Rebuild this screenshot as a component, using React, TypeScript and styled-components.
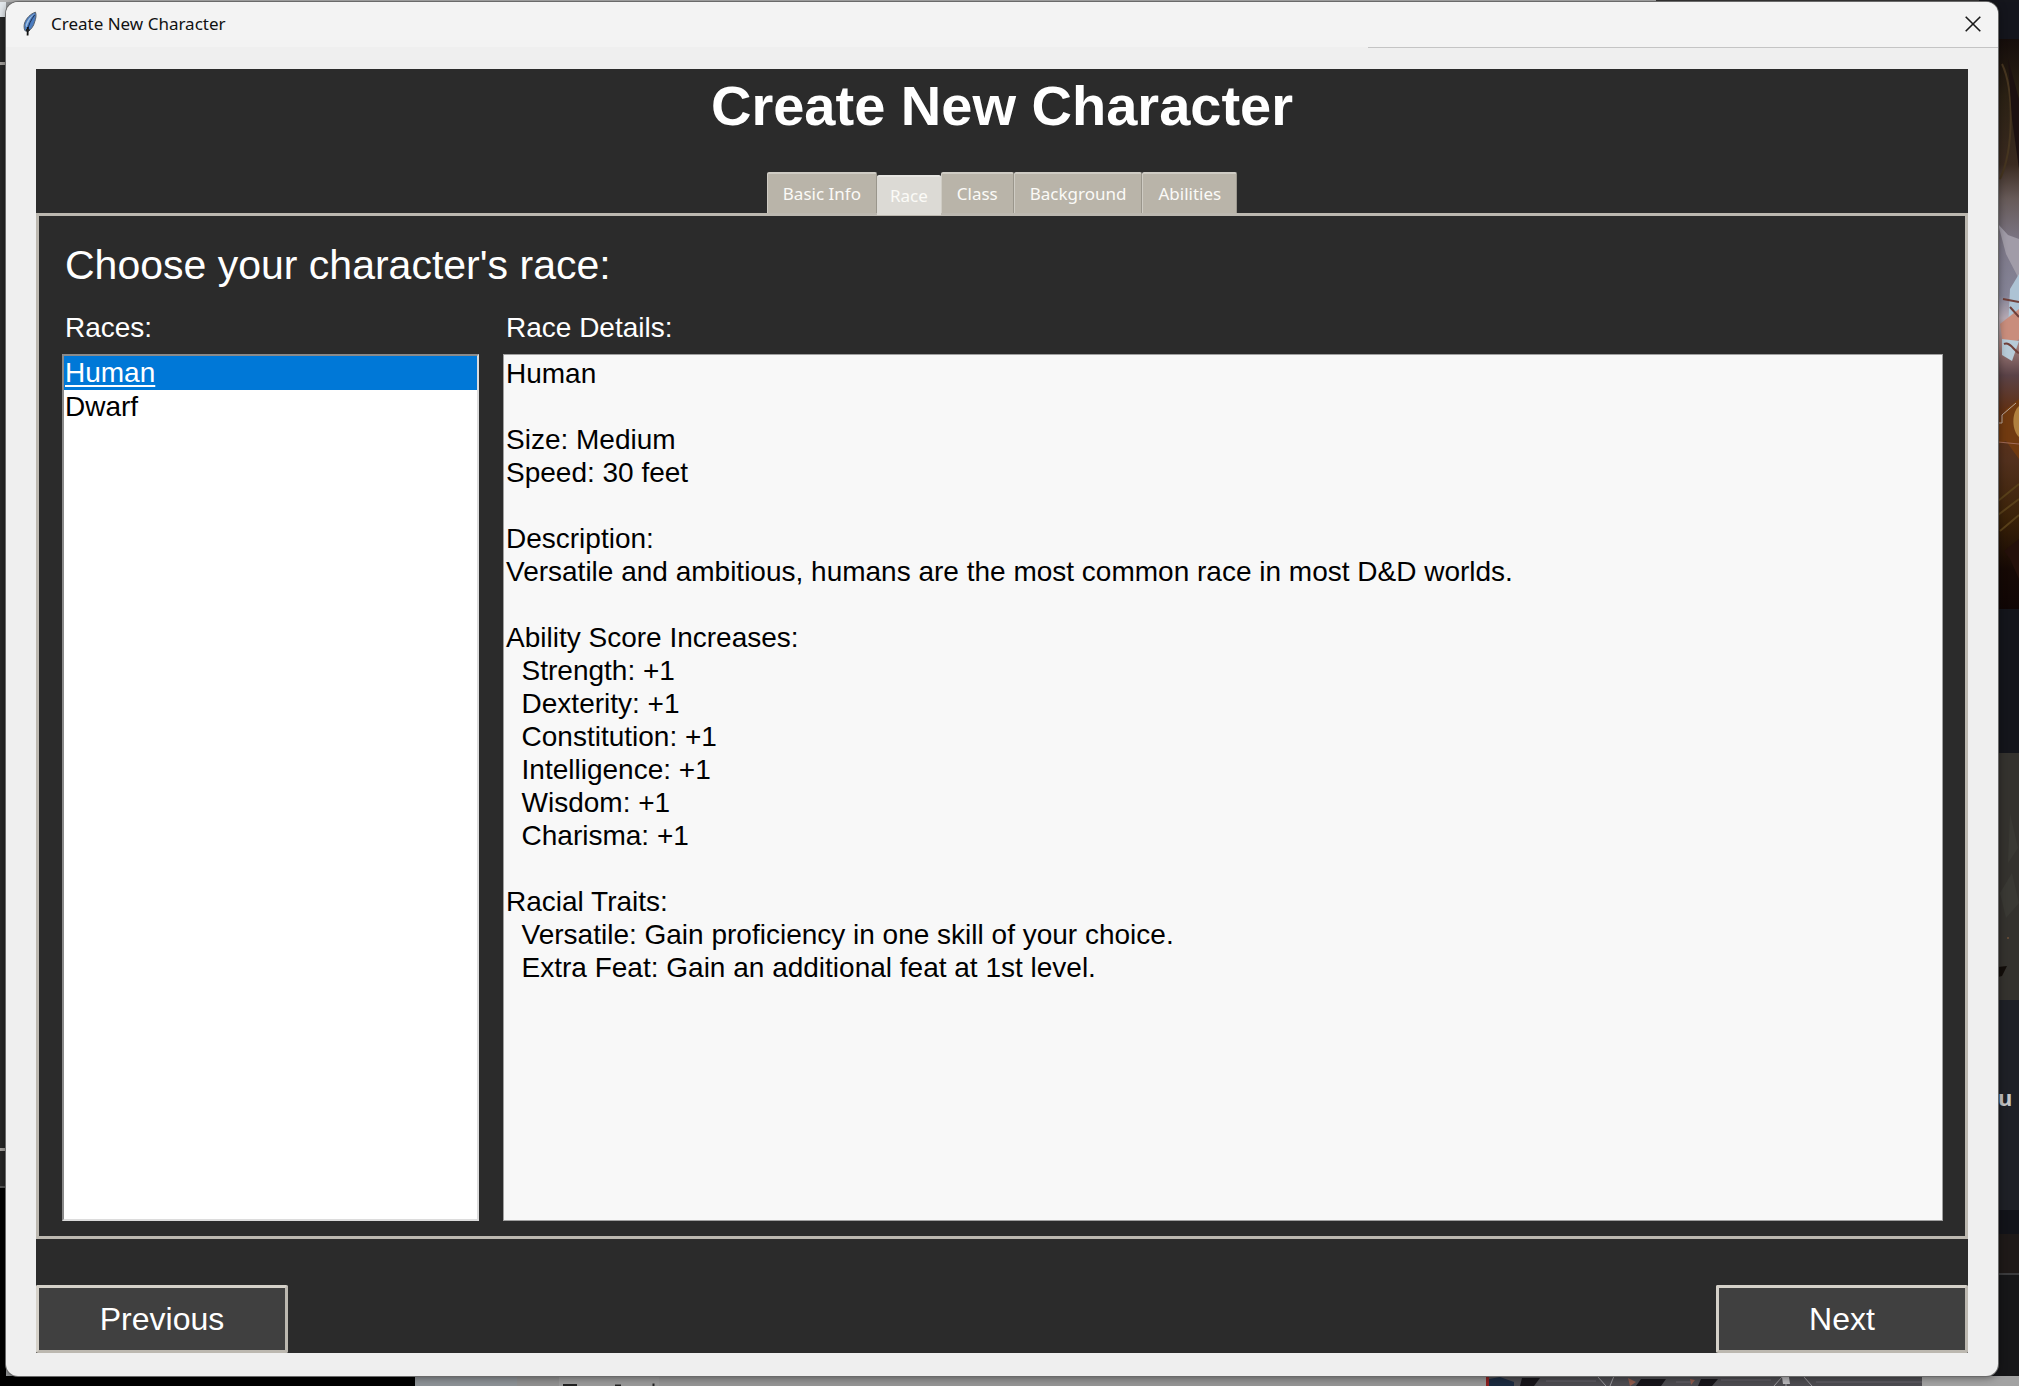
import React, { useState } from "react";
import styled, { createGlobalStyle } from "styled-components";

const SANS = `"Liberation Sans", Arial, sans-serif`;
const SYSTEM = `"Noto Sans", "Segoe UI", sans-serif`;

const GlobalStyle = createGlobalStyle`
  *, *::before, *::after { box-sizing: border-box; }
  body { margin: 0; background: #17181c; }
`;

const Desktop = styled.div`
  display: grid;
  grid-template: 2px 1fr 10px / 6px 1fr 21px;
  min-height: 100vh;
  overflow: hidden;
  background: linear-gradient(90deg, #9a9c9e 0 20px, #17181c 20px);
  font-family: ${SANS};
`;

const TopEdge = styled.div`
  grid-column: 1 / -1;
  background: linear-gradient(90deg, #b5b5b5 0 82%, #3a3838 82% 98%, #15161c 98%);
`;

const LeftEdge = styled.div`
  background: linear-gradient(
    #e3e8ec 0 15px, #272727 15px 60px, #a5a29e 60px 63px, #272727 63px 1146px,
    #a5a29e 1146px 1149px, #272727 1149px 1184px, #555555 1184px 1186px, #000000 1186px
  );
`;

const RightEdge = styled.div`
  display: flex;
  flex-direction: column;
  overflow: hidden;
  background: #15161c;
`;

const Strip = styled.div<{ $height: number; $color: string }>`
  flex: 0 0 ${(p) => p.$height}px;
  background: ${(p) => p.$color};
`;

const Rest = styled.div`
  flex: 1;
  background: #161618;
  border-top: 2px solid #3b3b3d;
`;

const PageText = styled.div`
  flex: 0 0 210px;
  padding-top: 81px;
  background: #1e2026;
  color: #c4c5c7;
  font: 700 22px/32px ${SYSTEM};
`;

const BottomEdge = styled.div`
  grid-column: 1 / -1;
  display: flex;
  overflow: hidden;
  background: #9a9a9a;
`;

const BottomPart = styled.div<{ $width: number; $color: string }>`
  flex: 0 0 ${(p) => p.$width}px;
  background: ${(p) => p.$color};
`;

const Spring = styled.div`
  flex: 1;
  background: #959595;
`;

const Window = styled.main`
  position: relative;
  display: flex;
  flex-direction: column;
  background: #efefef;
  border-radius: 12px;
  box-shadow: 0 0 0 1px #6a6a6a, 0 1px 8px rgba(0, 0, 0, 0.5);
`;

const TitleBar = styled.header`
  display: flex;
  align-items: center;
  height: 46px;
  padding: 0 17px 3px 16px;
  gap: 12px;
  border-radius: 12px 12px 0 0;
  background:
    linear-gradient(90deg, #efefef 0 1362px, #c4c4c4 1362px) left bottom / 100% 1px no-repeat,
    #f3f3f3;
`;

const WindowName = styled.span`
  flex: 1;
  color: #111111;
  font: 400 17px/24px ${SYSTEM};
`;

const CloseButton = styled.button`
  display: flex;
  padding: 0;
  border: 0;
  background: none;
`;

const Body = styled.div`
  flex: 1;
  display: flex;
  flex-direction: column;
  margin: 21px 30px 23px;
  background: #2b2b2b;
`;

const Title = styled.h1`
  margin: 5px 0 34px;
  color: #ffffff;
  text-align: center;
  font: 700 56px/64px ${SANS};
`;

const Tabs = styled.div`
  display: flex;
  justify-content: center;
  align-items: flex-end;
  height: 41px;
`;

const Tab = styled.button<{ $active: boolean }>`
  position: relative;
  height: ${(p) => (p.$active ? 40 : 41)}px;
  margin: 0 0 ${(p) => (p.$active ? -2 : 0)}px;
  padding: 0 ${(p) => (p.$active ? 13 : 15)}px;
  border: solid;
  border-width: ${(p) => (p.$active ? "2px 0 0" : "2px 1px 0")};
  border-color: ${(p) => (p.$active ? "#e6e5e1" : "#cfccc4 #9a968c #cfccc4 #cfccc4")};
  border-radius: 2px 2px 0 0;
  background: ${(p) => (p.$active ? "#dcdad5" : "#b9b4a9")};
  color: #fbfaf7;
  font: 400 17px/24px ${SYSTEM};
`;

const Page = styled.section`
  flex: 1;
  display: flex;
  flex-direction: column;
  padding: 25px 22px 15px 23px;
  border: 3px solid #bcb8b0;
`;

const Prompt = styled.h2`
  margin: 0 3px 22px;
  color: #ffffff;
  font: 400 41px/48px ${SANS};
`;

const Columns = styled.div`
  flex: 1;
  display: flex;
  gap: 24px;
`;

const Column = styled.div<{ $width?: number }>`
  flex: ${(p) => (p.$width ? `0 0 ${p.$width}px` : "1")};
  display: flex;
  flex-direction: column;
`;

const FieldName = styled.label`
  margin: 0 3px 10px;
  color: #ffffff;
  font: 400 28px/33px ${SANS};
`;

const RaceList = styled.select`
  flex: 1;
  width: 100%;
  padding: 0;
  overflow: hidden;
  border: 2px solid;
  border-color: #8a8a8a #dcdcdc #dcdcdc #8a8a8a;
  border-radius: 0;
  outline: 0;
  background: #ffffff;
  color: #000000;
  font: 400 28px/34px ${SANS};
`;

const RaceOption = styled.option`
  min-height: 34px;
  padding: 1px 1px 0;
  line-height: 33px;
  color: #000000;

  &:checked {
    background: #0078d7 linear-gradient(#0078d7, #0078d7);
    color: #ffffff;
    text-decoration: underline;
    text-decoration-thickness: 2px;
    text-underline-offset: 3px;
  }
`;

const Details = styled.textarea`
  flex: 1;
  display: block;
  width: 100%;
  padding: 2px;
  resize: none;
  overflow: hidden;
  border: 1px solid #a0a0a0;
  border-radius: 0;
  outline: 0;
  background: #f8f8f8;
  color: #000000;
  font: 400 28px/33px ${SANS};
`;

const Footer = styled.footer`
  display: flex;
  justify-content: space-between;
  margin-top: 46px;
`;

const NavButton = styled.button`
  width: 252px;
  height: 68px;
  padding: 0;
  border: 3px solid;
  border-color: #d5d1c9 #bcb8b0 #bcb8b0 #d5d1c9;
  border-radius: 2px;
  background: #404040;
  color: #ffffff;
  font: 400 32px/36px ${SANS};
`;

const RACES: Record<string, string> = {
  Human: `Human

Size: Medium
Speed: 30 feet

Description:
Versatile and ambitious, humans are the most common race in most D&D worlds.

Ability Score Increases:
  Strength: +1
  Dexterity: +1
  Constitution: +1
  Intelligence: +1
  Wisdom: +1
  Charisma: +1

Racial Traits:
  Versatile: Gain proficiency in one skill of your choice.
  Extra Feat: Gain an additional feat at 1st level.`,
  Dwarf: "Dwarf",
};

const TABS = ["Basic Info", "Race", "Class", "Background", "Abilities"];

const Feather = () => (
  <svg width="17" height="26" viewBox="0 0 17 26" aria-hidden="true">
    <path d="M13.5 1.2 C9 2.5 4 7 2.3 13 C1.8 16 2.2 19 3.4 20 L6 20.6 C9 18.5 11.8 15 12.6 11 C13.8 8 14.6 4 13.5 1.2Z" fill="#4a7cc0" stroke="#56606c" strokeWidth="1" />
    <path d="M12.5 2.5 C8.5 5 5 9 3.6 14 L4.4 17 C6 11 9 6 12.5 2.5Z" fill="#9dbde0" />
    <path d="M12.6 4 C9 9 6.6 13.5 5.8 19" fill="none" stroke="#1b2f55" strokeWidth="1" />
    <path d="M5.8 16 L5.6 24.6" stroke="#111111" strokeWidth="1.8" />
    <path d="M4 19 L7.6 19" stroke="#222222" strokeWidth="2" />
  </svg>
);

const CloseIcon = () => (
  <svg width="16" height="16" viewBox="0 0 16 16" aria-hidden="true">
    <path d="M0.7 0.7 L15.3 15.3 M15.3 0.7 L0.7 15.3" stroke="#1a1a1a" strokeWidth="1.6" />
  </svg>
);

const Painting = () => (
  <svg width="21" height="570" viewBox="0 0 21 570" style={{ flex: "none" }} aria-hidden="true">
    <defs>
      <linearGradient id="canvas" x1="0" y1="0" x2="0" y2="1">
        <stop offset="0" stopColor="#150d0b" />
        <stop offset="0.1" stopColor="#2b2114" />
        <stop offset="0.22" stopColor="#3a2a20" />
        <stop offset="0.28" stopColor="#675a58" />
        <stop offset="0.36" stopColor="#7d7888" />
        <stop offset="0.45" stopColor="#858497" />
        <stop offset="0.49" stopColor="#b8abb5" />
        <stop offset="0.54" stopColor="#a07c79" />
        <stop offset="0.59" stopColor="#5a4247" />
        <stop offset="0.65" stopColor="#613116" />
        <stop offset="0.74" stopColor="#52301d" />
        <stop offset="0.84" stopColor="#3a2208" />
        <stop offset="0.93" stopColor="#160905" />
        <stop offset="1" stopColor="#100605" />
      </linearGradient>
    </defs>
    <rect width="21" height="570" fill="url(#canvas)" />
    <path d="M4 25 C16 50 16 110 2 140" fill="none" stroke="#463520" strokeWidth="2" />
    <path d="M10 20 L21 60 L21 130 L14 80Z" fill="#1c1010" />
    <path d="M0 185 L10 196 L21 200 L21 240 L8 215Z" fill="#a19ca8" />
    <path d="M12 250 L21 235 L21 300 L10 290Z" fill="#adc3d4" />
    <path d="M2 285 L21 270 L21 300 L6 312Z" fill="#c98d7c" />
    <path d="M4 300 L21 302 L14 322 L4 316Z" fill="#b7cbd8" />
    <path d="M12 268 L21 278 M5 260 L21 263 M6 305 C12 302 16 312 21 314" fill="none" stroke="#70403a" strokeWidth="2" />
    <path d="M1 385 L8 370 L21 360 L21 420 L8 402 L0 405Z" fill="#713a10" />
    <path d="M1 384 L4 384 L4 376 L18 364" fill="none" stroke="#b9a69a" strokeWidth="1" />
    <path d="M21 367 C13 374 14 392 21 398Z" fill="#b0803f" />
    <path d="M0 403 L21 405" stroke="#a06b58" strokeWidth="1" />
    <path d="M0 462 L21 445 M0 476 L21 460 M2 492 L21 476" stroke="#59401a" strokeWidth="2" />
    <path d="M6 512 L21 500 L21 540 L12 520Z" fill="#24100a" />
  </svg>
);

const Stone = () => (
  <svg width="21" height="247" viewBox="0 0 21 247" style={{ flex: "none" }} aria-hidden="true">
    <rect width="21" height="247" fill="#34322e" />
    <path d="M12 60 L20 95 L10 110Z M2 140 L14 120 L21 150 L8 165Z" fill="#3a3934" />
    <path d="M0 214 L9 213 L4 223 L0 224Z" fill="#120d0a" />
    <circle cx="10" cy="185" r="1" fill="#6c5038" />
  </svg>
);

const Glyphs = () => (
  <svg width="100" height="10" viewBox="0 0 100 10" aria-hidden="true">
    <path d="M4 9 H18 M56 9.5 H62 M94.5 7.5 V10" stroke="#242424" strokeWidth="2" />
  </svg>
);

const Crowd = () => (
  <svg width="436" height="10" viewBox="0 0 436 10" aria-hidden="true">
    <rect width="436" height="10" fill="#4c4b50" />
    <path d="M0 0 H3 V10 H0Z" fill="#8c2020" />
    <path d="M3 3 L14 1 L28 6 V10 H3Z" fill="#1c2b40" />
    <path d="M36 2 H54 L48 10 H34Z M155 3 H180 L175 10 H150Z M215 3 H232 L226 10 H212Z" fill="#17151a" />
    <path d="M142 2 L150 6 L144 10Z M204 3 L209 4 L205 9Z" fill="#8f5b4c" />
    <path d="M112 1 L120 10 M128 0 L124 10 M300 1 V10 M288 10 L296 1 M318 1 L326 10" stroke="#9a999d" />
    <path d="M60 5 H110 M190 6 H205 M235 4 H285 M330 6 H436" stroke="#66656a" />
    <path d="M296 1 H303 L304 8 H297Z" fill="#b9b8bb" />
  </svg>
);

export default function App() {
  const [race, setRace] = useState("Human");
  const [tab, setTab] = useState("Race");

  return (
    <>
      <GlobalStyle />
      <Desktop>
        <TopEdge />
        <LeftEdge />
        <Window>
          <TitleBar>
            <Feather />
            <WindowName>Create New Character</WindowName>
            <CloseButton aria-label="Close">
              <CloseIcon />
            </CloseButton>
          </TitleBar>
          <Body>
            <Title>Create New Character</Title>
            <Tabs role="tablist">
              {TABS.map((name) => (
                <Tab
                  key={name}
                  role="tab"
                  aria-selected={name === tab}
                  $active={name === tab}
                  onClick={() => setTab(name)}
                >
                  {name}
                </Tab>
              ))}
            </Tabs>
            <Page>
              <Prompt>Choose your character's race:</Prompt>
              <Columns>
                <Column $width={417}>
                  <FieldName htmlFor="races">Races:</FieldName>
                  <RaceList id="races" size={20} value={race} onChange={(e) => setRace(e.target.value)}>
                    {Object.keys(RACES).map((name) => (
                      <RaceOption key={name} value={name}>
                        {name}
                      </RaceOption>
                    ))}
                  </RaceList>
                </Column>
                <Column>
                  <FieldName htmlFor="details">Race Details:</FieldName>
                  <Details id="details" readOnly spellCheck={false} value={RACES[race]} />
                </Column>
              </Columns>
            </Page>
            <Footer>
              <NavButton>Previous</NavButton>
              <NavButton>Next</NavButton>
            </Footer>
          </Body>
        </Window>
        <RightEdge>
          <Strip $height={37} $color="#14151c" />
          <Painting />
          <Strip $height={144} $color="#14151b" />
          <Stone />
          <PageText>u</PageText>
          <Strip $height={24} $color="#121319" />
          <Strip $height={39} $color="#1e1918" />
          <Rest />
        </RightEdge>
        <BottomEdge>
          <BottomPart $width={415} $color="#000000" />
          <BottomPart $width={102} $color="#8d9296" />
          <BottomPart $width={42} $color="#909090" />
          <Glyphs />
          <Spring />
          <Crowd />
          <BottomPart $width={97} $color="#a3a3a3" />
        </BottomEdge>
      </Desktop>
    </>
  );
}
